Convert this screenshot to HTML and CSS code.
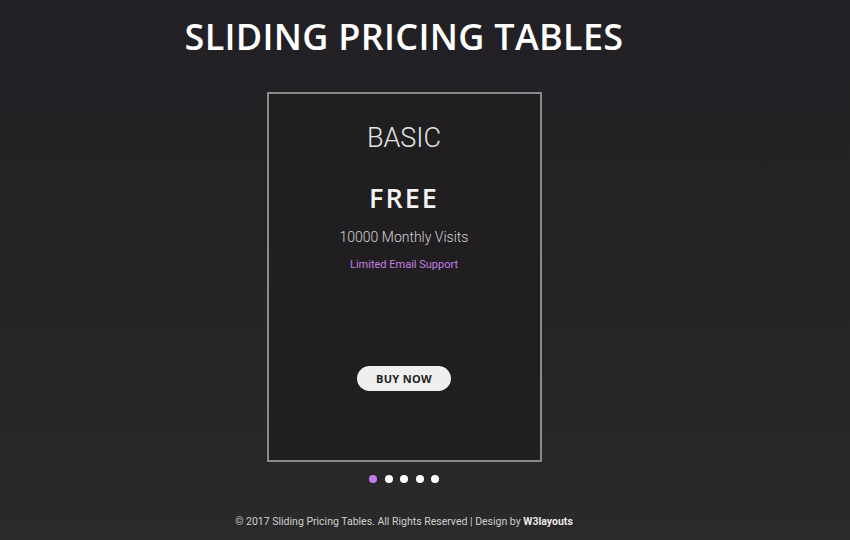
FILE: index.html
```html
<!DOCTYPE html>
<html lang="en">
<head>
  <meta charset="UTF-8" />
  <meta name="viewport" content="width=device-width, initial-scale=1" />
  <title>Sliding Pricing Tables</title>
  <link rel="stylesheet" href="styles.css">
</head>
<body>
  <div class="wrap">
    <h1 class="page-title">SLIDING PRICING TABLES</h1>

    <div class="slider">
      <div class="price-card">
        <h3 class="plan-name">BASIC</h3>
        <div class="plan-price">FREE</div>
        <p class="plan-visits">10000 Monthly Visits</p>
        <p class="plan-support">Limited Email Support</p>
        <a class="buy-btn" href="#">BUY NOW</a>
      </div>

      <div class="dots">
        <span class="dot active"></span>
        <span class="dot"></span>
        <span class="dot"></span>
        <span class="dot"></span>
        <span class="dot"></span>
      </div>
    </div>

    <footer class="footer">
      <p>&copy; 2017 Sliding Pricing Tables. All Rights Reserved | Design by <a href="#">W3layouts</a></p>
    </footer>
  </div>
</body>
</html>
```

FILE: styles.css
```css
html, body {
  height: 100%;
}
body {
  margin: 0;
  font-family: Roboto, "Liberation Sans", sans-serif;
  background: linear-gradient(to bottom, #222024 0%, #252325 50%, #2a2a2a 100%);
  color: #ddd;
}
.wrap {
  width: 808px;
}
.page-title {
  margin: 0;
  padding-top: 15px;
  text-align: center;
  font-family: "Open Sans", sans-serif;
  font-weight: 600;
  font-size: 36px;
  line-height: 44px;
  letter-spacing: 0.3px;
  color: #fff;
}
.slider {
  display: flex;
  flex-direction: column;
  align-items: center;
  margin-top: 33px;
}
.price-card {
  box-sizing: border-box;
  width: 275px;
  height: 370px;
  border: 2px solid #8a898c;
  background: #211e22;
  display: flex;
  flex-direction: column;
  align-items: center;
  padding-top: 28px;
}
.plan-name {
  margin: 0;
  font-weight: 300;
  font-size: 27px;
  line-height: 32px;
  color: #e2e2e2;
}
.plan-price {
  margin-top: 28px;
  font-family: "Open Sans", sans-serif;
  font-weight: 600;
  font-size: 27px;
  line-height: 32px;
  letter-spacing: 2px;
  color: #f4f4f4;
}
.plan-visits {
  margin: 13px 0 0;
  font-weight: 300;
  font-size: 14px;
  line-height: 20px;
  color: #d4d4d4;
}
.plan-support {
  margin: 11px 0 0;
  font-size: 11px;
  line-height: 14px;
  color: #c27ee6;
}
.buy-btn {
  margin-top: 94px;
  width: 94px;
  height: 25px;
  line-height: 25px;
  text-align: center;
  border-radius: 13px;
  background: #efefef;
  color: #1e1e1e;
  font-family: "Open Sans", sans-serif;
  font-weight: 700;
  font-size: 11px;
  letter-spacing: 0.3px;
  text-decoration: none;
}
.dots {
  display: flex;
  gap: 7.5px;
  margin-top: 13px;
}
.dot {
  width: 8px;
  height: 8px;
  border-radius: 50%;
  background: #fff;
}
.dot.active {
  background: #c27be8;
}
.footer {
  text-align: center;
  margin-top: 32px;
}
.footer p {
  margin: 0;
  font-size: 10.5px;
  line-height: 14px;
  color: #cfcfcf;
}
.footer a {
  color: #e8e8e8;
  font-weight: 700;
  text-decoration: none;
}
```
